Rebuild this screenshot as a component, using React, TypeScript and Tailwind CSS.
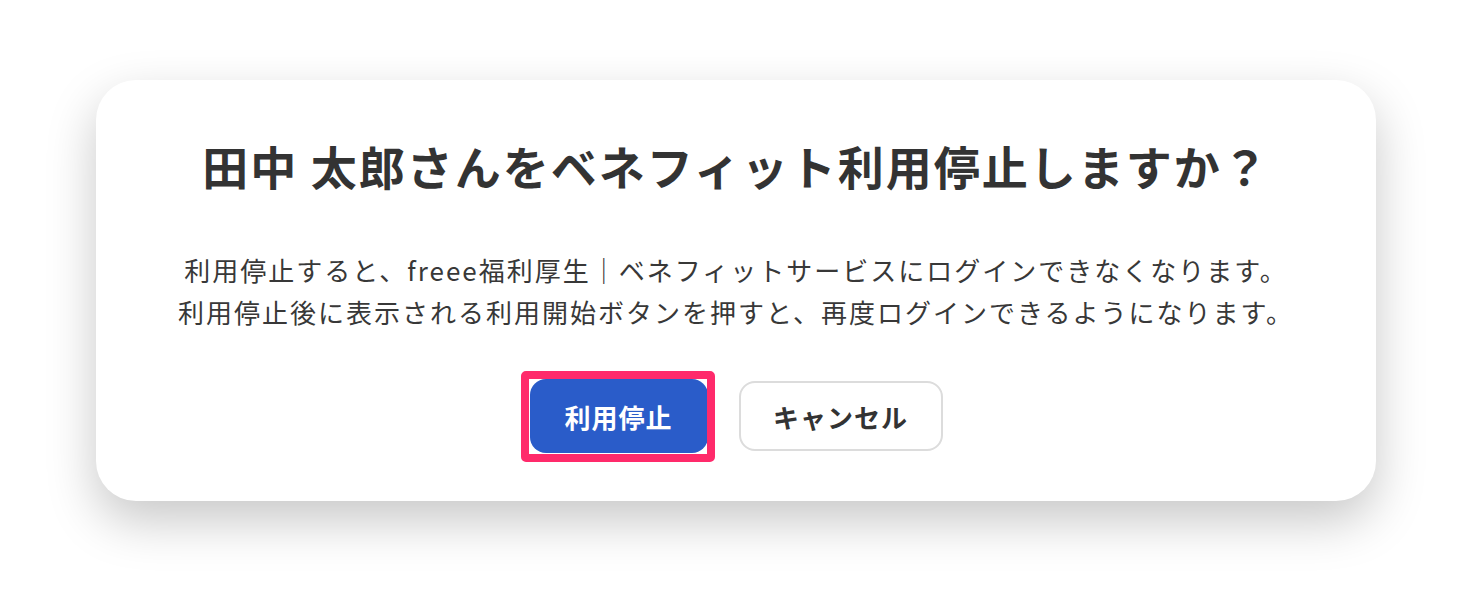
export default function App() {
  return (
    <div
      className="min-h-[612px] w-full bg-white pt-[80px]"
      style={{ fontFamily: '"Noto Sans CJK JP", "Noto Sans", sans-serif' }}
    >
      <div className="mx-auto flex w-[1280px] flex-col items-center rounded-[40px] bg-white pb-[48px] pt-[55px] shadow-[0_20px_50px_rgba(0,0,0,0.22)]">
        <h1 className="text-[46px] font-bold leading-[60px] tracking-[2px] text-[#333333]">
          田中 太郎さんをベネフィット利用停止しますか？
        </h1>

        <div className="mt-[54px] text-center text-[26px] leading-[42px] tracking-[2px] text-[#383838]">
          <p>利用停止すると、freee福利厚生｜ベネフィットサービスにログインできなくなります。</p>
          <p>利用停止後に表示される利用開始ボタンを押すと、再度ログインできるようになります。</p>
        </div>

        <div className="mt-[46px] flex items-center gap-[31px]">
          <div className="relative">
            <button className="flex h-[74px] w-[178px] items-center justify-center rounded-2xl bg-[#2a5cc9] text-[26px] font-bold tracking-[1px] text-white">
              利用停止
            </button>
            {/* highlight frame */}
            <div className="pointer-events-none absolute -bottom-[9px] -left-[9px] -right-[7px] -top-[8px] rounded-[5px] border-[8px] border-[#ff2a6b]" />
          </div>
          <button className="flex h-[70px] w-[204px] items-center justify-center rounded-2xl border-2 border-[#dcdcdc] bg-white text-[26px] font-bold tracking-[1px] text-[#333333]">
            キャンセル
          </button>
        </div>
      </div>
    </div>
  );
}
